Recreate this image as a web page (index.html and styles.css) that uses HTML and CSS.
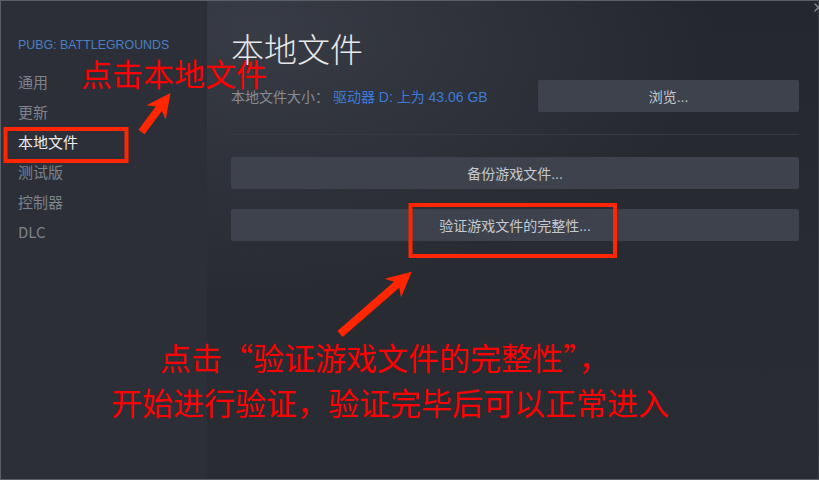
FILE: index.html
```html
<!DOCTYPE html>
<html lang="zh-CN">
<head>
<meta charset="utf-8">
<title>本地文件</title>
<link rel="stylesheet" href="styles.css">
</head>
<body>
<div class="window">
  <aside class="sidebar">
    <div class="game">PUBG: BATTLEGROUNDS</div>
    <nav class="nav">
      <div class="nav-item">通用</div>
      <div class="nav-item">更新</div>
      <div class="nav-item active">本地文件</div>
      <div class="nav-item">测试版</div>
      <div class="nav-item">控制器</div>
      <div class="nav-item">DLC</div>
    </nav>
  </aside>
  <main class="main">
    <h1 class="title">本地文件</h1>
    <div class="size-row">
      <div class="size-label">本地文件大小： <span class="size-value">驱动器 D: 上为 43.06 GB</span></div>
      <button class="btn btn-browse">浏览...</button>
    </div>
    <div class="sep"></div>
    <button class="btn btn-wide btn-backup">备份游戏文件...</button>
    <button class="btn btn-wide btn-verify">验证游戏文件的完整性...</button>
  </main>
</div>

<svg class="overlay" width="819" height="480" viewBox="0 0 819 480" xmlns="http://www.w3.org/2000/svg">
  <g stroke="#8a8e96" stroke-width="1.3" stroke-linecap="round">
    <line x1="815" y1="4" x2="822" y2="11"/>
    <line x1="822" y1="4" x2="815" y2="11"/>
  </g>
  <rect x="5.5" y="129" width="121" height="32" fill="none" stroke="#ff2600" stroke-width="4"/>
  <rect x="410.5" y="205" width="204.5" height="51" fill="none" stroke="#ff2600" stroke-width="4"/>
  <polygon transform="translate(141.5 132) rotate(-53.4)" fill="#ff2600"
    points="0,-3.8 29,-3.8 24.5,-12 48.6,0 24.5,12 29,3.8 0,3.8"/>
  <polygon transform="translate(340 334) rotate(-41)" fill="#ff2600"
    points="0,-4 75,-4 70,-12.5 95,0 70,12.5 75,4 0,4"/>
</svg>

<div class="note note-top">点击本地文件</div>
<div class="note note-bottom">
  <div class="note-line first">点击“验证游戏文件的完整性”，</div>
  <div class="note-line">开始进行验证，验证完毕后可以正常进入</div>
</div>
</body>
</html>
```

FILE: styles.css
```css
html, body {
  margin: 0;
  padding: 0;
  background: #2a2d34;
}

body {
  position: relative;
  width: 819px;
  height: 480px;
  overflow: hidden;
  font-family: "Liberation Sans", "Noto Sans CJK SC", sans-serif;
}

.window {
  box-sizing: border-box;
  width: 819px;
  height: 480px;
  border: 1px solid #5b5f67;
  border-right-color: #3a3d44;
  display: flex;
}

.sidebar {
  width: 206px;
  flex: none;
  background: #2c2f38;
  padding: 36px 0 0 17px;
  box-sizing: border-box;
}

.game {
  font-size: 12.4px;
  line-height: 16px;
  color: #4a7fc3;
  letter-spacing: 0;
}

.nav {
  margin-top: 14px;
  display: flex;
  flex-direction: column;
}

.nav-item {
  height: 30px;
  line-height: 30px;
  font-size: 15px;
  color: #7d828b;
  font-family: "Noto Sans CJK SC", "Liberation Sans", sans-serif;
}

.nav-item.active {
  color: #ebebeb;
}

.main {
  flex: 1;
  min-width: 0;
  padding: 0 19px 0 24px;
  display: flex;
  flex-direction: column;
  background:
    radial-gradient(ellipse 75% 55% at 8% 6%, rgba(58, 62, 72, 0.9) 0%, rgba(58, 62, 72, 0) 100%),
    linear-gradient(to bottom, #24272d 0%, #282b32 55%, #292c33 100%);
}

.title {
  margin: 27px 0 0;
  font-family: "Noto Sans CJK SC", sans-serif;
  font-weight: 300;
  font-size: 33px;
  line-height: 40px;
  color: #e8e8e8;
  letter-spacing: 0;
}

.size-row {
  margin-top: 12px;
  height: 32px;
  display: flex;
  align-items: center;
  justify-content: space-between;
}

.size-label {
  font-size: 14px;
  color: #898d95;
  white-space: nowrap;
}

.size-value {
  color: #3d7bd8;
}

.btn {
  border: none;
  border-radius: 2px;
  background: #3d424c;
  color: #c6c9cf;
  font-family: "Liberation Sans", "Noto Sans CJK SC", sans-serif;
  font-size: 14px;
  height: 32px;
  padding: 0;
  margin: 0;
  display: block;
  cursor: pointer;
}

.btn-browse {
  width: 261px;
  flex: none;
}

.sep {
  margin-top: 22px;
  height: 1px;
  background: #363a42;
}

.btn-wide {
  width: 100%;
}

.btn-backup {
  margin-top: 22px;
}

.btn-verify {
  margin-top: 20px;
}

.overlay {
  position: absolute;
  left: 0;
  top: 0;
  pointer-events: none;
}

.note {
  position: absolute;
  font-family: "Noto Sans CJK SC", sans-serif;
  font-size: 31px;
  color: #ff0000;
  white-space: nowrap;
}

.note-top {
  left: 81px;
  top: 57px;
  line-height: 31px;
}

.note-bottom {
  left: 111px;
  top: 334px;
  line-height: 45px;
}

.note-line.first {
  padding-left: 49px;
}
```
